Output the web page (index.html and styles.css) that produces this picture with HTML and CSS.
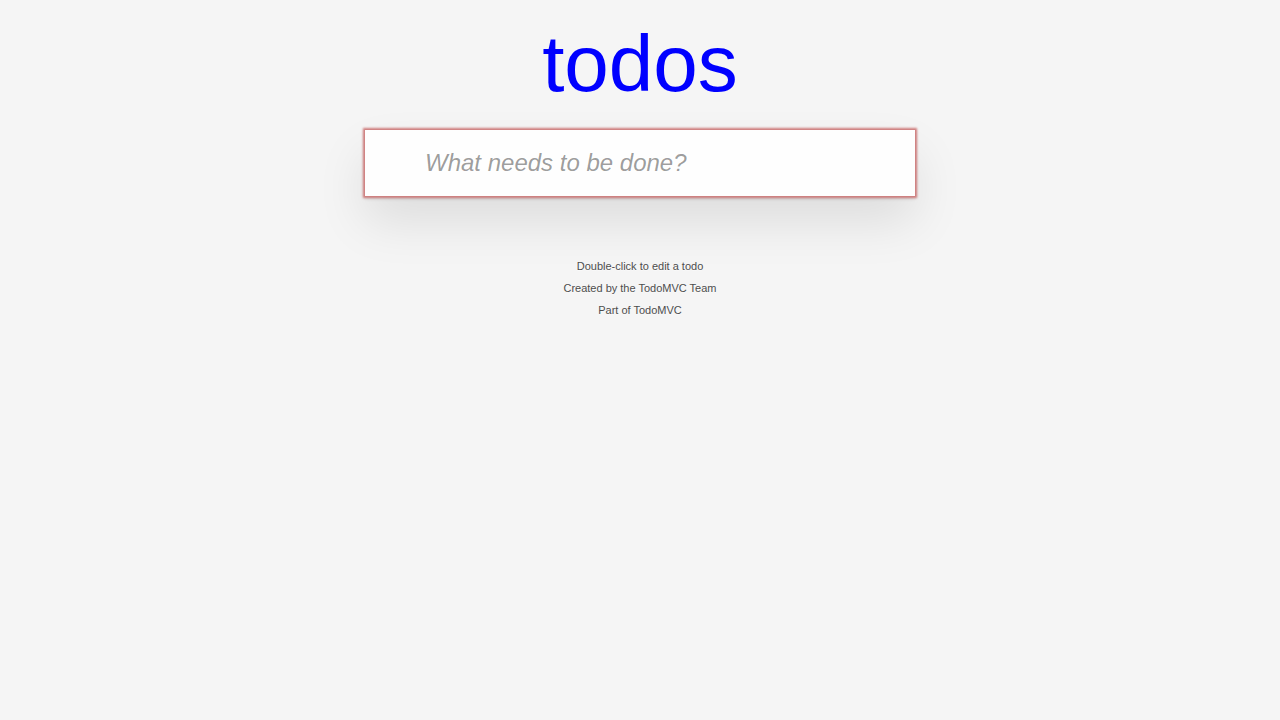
FILE: index.html
```html
<!DOCTYPE html>
<html lang="en">
<head>
<meta charset="utf-8">
<title>TodoMVC</title>
<link rel="stylesheet" href="styles.css">
</head>
<body>
<div class="page">
  <header class="header">
    <h1 class="title">todos</h1>
  </header>
  <section class="todoapp">
    <input class="new-todo" type="text" placeholder="What needs to be done?">
  </section>
  <footer class="info">
    <p>Double-click to edit a todo</p>
    <p>Created by the TodoMVC Team</p>
    <p>Part of TodoMVC</p>
  </footer>
</div>
</body>
</html>
```

FILE: styles.css
```css
html, body {
  margin: 0;
  padding: 0;
}
body {
  background: #f5f5f5;
  color: #111;
  font-family: "Liberation Sans", Arial, Helvetica, sans-serif;
  font-size: 14px;
  line-height: 1.4em;
}
.page {
  width: 550px;
  margin: 0 auto;
}
.header {
  padding-top: 24px;
  margin-bottom: 26px;
}
.title {
  margin: 0;
  font-size: 80px;
  line-height: 80px;
  font-weight: 200;
  text-align: center;
  color: #0000ff;
}
.todoapp {
  background: #fff;
  box-shadow: 0 2px 4px 0 rgba(0,0,0,0.2), 0 25px 50px 0 rgba(0,0,0,0.1);
}
.new-todo {
  display: block;
  box-sizing: content-box;
  width: 474px;
  margin: 0;
  padding: 16px 16px 16px 60px;
  border: none;
  outline: 0;
  background: rgba(0,0,0,0.003);
  box-shadow: 0 0 2px 2px #cf7d7d;
  font-family: "Liberation Sans", Arial, Helvetica, sans-serif;
  font-size: 24px;
  line-height: 1.4em;
  height: 1.4em;
  color: inherit;
}
.new-todo::placeholder {
  font-style: italic;
  font-weight: 400;
  color: rgba(0,0,0,0.4);
}
.info {
  margin-top: 65px;
  color: #4d4d4d;
  font-size: 11px;
  text-shadow: 0 1px 0 rgba(255,255,255,0.5);
  text-align: center;
}
.info p {
  line-height: 1;
  margin: 11px 0;
}
```
